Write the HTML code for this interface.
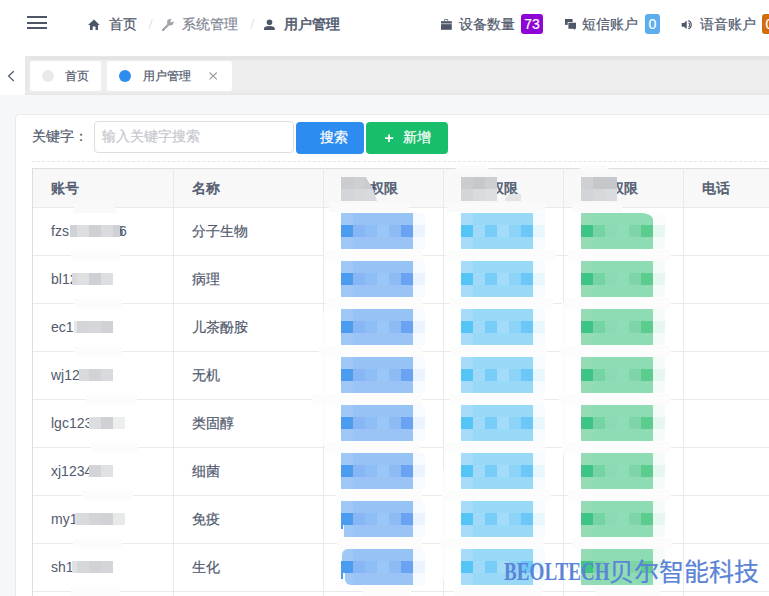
<!DOCTYPE html>
<html><head><meta charset="utf-8">
<style>
*{box-sizing:border-box;margin:0;padding:0}
html,body{-webkit-text-stroke-width:0.2px;width:769px;height:596px;overflow:hidden;background:#f5f7f9;font-family:"Liberation Sans",sans-serif;color:#515a6e;font-size:14px;position:relative}
div,span,svg{position:absolute}
.ham{left:27px;width:20px;height:2px;background:#4e5668}
.t{height:20px;line-height:20px;font-size:14px;white-space:nowrap}
.badge{top:14px;height:20px;border-radius:3px;color:#fff;font-size:14px;line-height:21px;text-align:center}
.tab{top:61px;height:30px;background:#fff;border-radius:3px;font-size:12px;line-height:30px}
.dot{width:12px;height:12px;border-radius:6px;top:9px}
.btn{top:122px;height:32px;border-radius:4px;color:#fff;font-size:14px;line-height:32px;white-space:nowrap}
.hl{height:1px;background:#e8eaec}
.vl{width:1px;background:#e8eaec}
.cell{height:20px;line-height:20px;font-size:14px;white-space:nowrap;color:#515a6e}
.th{font-weight:normal;-webkit-text-stroke-width:0.55px}
.m{width:12px;height:12px}
</style></head><body>
<!-- header -->
<div style="left:0;top:0;width:769px;height:56px;background:#fff"></div>
<div class="ham" style="top:16px"></div>
<div class="ham" style="top:22px"></div>
<div class="ham" style="top:27px"></div>
<svg style="left:84px;top:12px" width="24" height="24" viewBox="84 12 24 24"><path d="M88 25 L94 19.5 L99.7 25 L98 25 L98 30 L95.5 30 L95.5 26.5 L92.7 26.5 L92.7 30 L90 30 L90 25 Z" fill="#4e5668"/></svg>
<div class="t" style="left:109px;top:14px;color:#515a6e">首页</div>
<svg style="left:140px;top:12px" width="24" height="24" viewBox="140 12 24 24"><path d="M152.3 19 L149.2 28.6" stroke="#dcdee2" stroke-width="1"/></svg>
<svg style="left:158px;top:15px" width="20" height="20" viewBox="158 15 20 20"><path d="M163 30 L169 24" stroke="#a0a4ab" stroke-width="2.4" stroke-linecap="round"/><circle cx="170.3" cy="22.3" r="3.2" fill="#a0a4ab"/><path d="M170.9 21.7 L174.5 18.1" stroke="#fff" stroke-width="2.3" stroke-linecap="butt"/></svg>
<div class="t" style="left:182px;top:14px;color:#808695">系统管理</div>
<svg style="left:244px;top:12px" width="24" height="24" viewBox="244 12 24 24"><path d="M254 19.2 L250.9 28.5" stroke="#dcdee2" stroke-width="1"/></svg>
<svg style="left:260px;top:15px" width="20" height="20" viewBox="260 15 20 20"><circle cx="269.5" cy="22.3" r="2.8" fill="#4e5668"/><path d="M264 30 L264 28.5 Q264 26 269.4 26 Q274.8 26 274.8 28.5 L274.8 30 Z" fill="#4e5668"/></svg>
<div class="t" style="left:284px;top:14px;color:#515a6e;-webkit-text-stroke-width:0.55px">用户管理</div>

<svg style="left:436px;top:14px" width="20" height="20" viewBox="436 14 20 20"><path d="M444.6 21.2 L444.6 19.5 L447.7 19.5 L447.7 21.2" stroke="#6a7182" stroke-width="0.9" fill="none"/><rect x="441" y="21.2" width="10.8" height="8.6" fill="#4e5668"/><rect x="441" y="23.3" width="10.8" height="0.9" fill="#c9ccd2"/></svg>
<div class="t" style="left:459px;top:14px">设备数量</div>
<div class="badge" style="left:521px;width:22px;background:#8e06d6">73</div>
<svg style="left:560px;top:14px" width="20" height="20" viewBox="560 14 20 20"><rect x="565" y="19" width="7.6" height="5.9" fill="#4e5668"/><rect x="567.7" y="22" width="9" height="7.5" fill="#fff"/><rect x="568.4" y="22.7" width="7.6" height="6.1" fill="#4e5668"/><path d="M573.5 28.5 L575 30.3 L575 28.5 Z" fill="#4e5668"/></svg>
<div class="t" style="left:582px;top:14px">短信账户</div>
<div class="badge" style="left:645px;width:15px;background:#5cadee">0</div>
<svg style="left:676px;top:14px" width="20" height="20" viewBox="676 14 20 20"><path d="M681.7 22.9 L684 22.9 L686.7 20.4 L686.7 28.9 L684 26.8 L681.7 26.8 Z" fill="#4e5668"/><path d="M688.5 22.6 A2.6 2.6 0 0 1 688.5 27" stroke="#4e5668" stroke-width="1.1" fill="none"/><path d="M688.3 20.5 A4.6 4.6 0 0 1 688.3 29.1" stroke="#4e5668" stroke-width="1.1" fill="none"/></svg>
<div class="t" style="left:700px;top:14px">语音账户</div>
<div class="badge" style="left:762px;width:15px;background:#d16b0d">0</div>

<!-- tabs -->
<div style="left:0;top:56px;width:769px;height:39px;background:#eeeeee"></div>
<div style="left:0;top:56px;width:769px;height:5px;background:linear-gradient(#e8e8e8 0,#e2e2e2 45%,#e8e8e8 75%,#eeeeee 100%)"></div>
<div style="left:25px;top:56px;width:5px;height:39px;background:linear-gradient(90deg,#e6e6e6,#eaeaea)"></div><div style="left:0;top:91px;width:769px;height:4px;background:linear-gradient(#eeeeee,#e6e6e6)"></div><div style="left:0;top:56px;width:25px;height:39px;background:#fff"></div>
<svg style="left:0;top:60px" width="25" height="35" viewBox="0 60 25 35"><path d="M13.8 71.2 L8.6 76.1 L13.8 81" stroke="#515a6e" stroke-width="1.3" fill="none"/></svg>
<div class="tab" style="left:30px;width:71px"><span class="dot" style="left:12px;top:9px;background:#e8eaec"></span><span style="left:35px;top:0">首页</span></div>
<div class="tab" style="left:107px;width:125px"><span class="dot" style="left:12px;top:9px;background:#2d8cf0"></span><span style="left:36px;top:0">用户管理</span><svg style="left:102px;top:11px" width="10" height="9" viewBox="209 72.5 10 9"><path d="M209.5 73 L216.8 79.8 M216.8 73 L209.5 79.8" stroke="#9a9a9a" stroke-width="1.1"/></svg></div>

<!-- card -->
<div style="left:15px;top:114px;width:780px;height:520px;background:#fff;border:1px solid #e8eaec;border-radius:4px"></div>
<div class="t" style="left:32px;top:126px">关键字：</div>
<div style="left:94px;top:121px;width:200px;height:32px;border:1px solid #dcdee2;border-radius:4px;background:#fff"></div>
<div class="t" style="left:102px;top:126px;color:#c5c8ce">输入关键字搜索</div>
<div class="btn" style="left:296px;width:68px;background:#2d8cf0"><span style="left:24px;top:-1px">搜索</span></div>
<div class="btn" style="left:366px;width:82px;background:#19be6b"><svg style="left:17px;top:11px" width="12" height="12" viewBox="383 133 12 12"><path d="M389 134.5 L389 141.9 M385 138.2 L393.2 138.2" stroke="#fff" stroke-width="1.8"/></svg><span style="left:37px;top:-1px">新增</span></div>
<div style="left:32px;top:161px;width:740px;height:0;border-top:1px dashed #e3e5e8"></div>

<!-- table -->
<div style="left:32px;top:168px;width:740px;height:40px;background:#f8f8f9"></div>
<div class="hl" style="left:32px;top:168px;width:740px;background:#dcdee2"></div>
<div class="hl" style="left:32px;top:207px;width:740px"></div>
<div class="hl" style="left:32px;top:255px;width:740px"></div>
<div class="hl" style="left:32px;top:303px;width:740px"></div>
<div class="hl" style="left:32px;top:351px;width:740px"></div>
<div class="hl" style="left:32px;top:399px;width:740px"></div>
<div class="hl" style="left:32px;top:447px;width:740px"></div>
<div class="hl" style="left:32px;top:495px;width:740px"></div>
<div class="hl" style="left:32px;top:543px;width:740px"></div>
<div class="hl" style="left:32px;top:591px;width:740px"></div>
<div class="vl" style="left:32px;top:168px;height:430px;background:#dcdee2"></div>
<div class="vl" style="left:173px;top:168px;height:430px"></div>
<div class="vl" style="left:323px;top:168px;height:430px"></div>
<div class="vl" style="left:443px;top:168px;height:430px"></div>
<div class="vl" style="left:563px;top:168px;height:430px"></div>
<div class="vl" style="left:683px;top:168px;height:430px"></div>

<div class="cell th" style="left:51px;top:178px">账号</div>
<div class="cell th" style="left:192px;top:178px">名称</div>
<div class="cell th" style="left:342px;top:178px">用户权限</div>
<div class="cell th" style="left:462px;top:178px">用户权限</div>
<div class="cell th" style="left:582px;top:178px">用户权限</div>
<div class="cell th" style="left:702px;top:178px">电话</div>

<div class="cell" style="-webkit-text-stroke-width:0;left:51px;top:221px">fzs1234566</div><div class="cell" style="-webkit-text-stroke-width:0;left:119px;top:221px;width:10px">6</div><div class="cell" style="left:192px;top:221px">分子生物</div>
<div class="cell" style="-webkit-text-stroke-width:0;left:51px;top:269px">bl12345</div><div class="cell" style="left:192px;top:269px">病理</div>
<div class="cell" style="-webkit-text-stroke-width:0;left:51px;top:317px">ec12345</div><div class="cell" style="left:192px;top:317px">儿茶酚胺</div>
<div class="cell" style="-webkit-text-stroke-width:0;left:51px;top:365px">wj12345</div><div class="cell" style="left:192px;top:365px">无机</div>
<div class="cell" style="-webkit-text-stroke-width:0;left:51px;top:413px">lgc123456</div><div class="cell" style="left:192px;top:413px">类固醇</div>
<div class="cell" style="-webkit-text-stroke-width:0;left:51px;top:461px">xj12345</div><div class="cell" style="left:192px;top:461px">细菌</div>
<div class="cell" style="-webkit-text-stroke-width:0;left:51px;top:509px">my123456</div><div class="cell" style="left:192px;top:509px">免疫</div>
<div class="cell" style="-webkit-text-stroke-width:0;left:51px;top:557px">sh12345</div><div class="cell" style="left:192px;top:557px">生化</div>

<div style="left:322px;top:313px;width:3px;height:132px;background:#fcfcfc"></div>
<div style="left:442px;top:470px;width:3px;height:110px;background:#fcfcfc"></div>
<div style="left:562px;top:303px;width:3px;height:152px;background:#fcfcfc"></div>
<div style="left:324px;top:250px;width:99px;height:11px;background:#fcfcfc"></div>
<div style="left:326px;top:298px;width:97px;height:11px;background:#fcfcfc"></div>
<div style="left:319px;top:346px;width:104px;height:11px;background:#fcfcfc"></div>
<div style="left:312px;top:394px;width:110px;height:11px;background:#fcfcfc"></div>
<div style="left:325px;top:442px;width:95px;height:11px;background:#fcfcfc"></div>
<div style="left:336px;top:490px;width:86px;height:11px;background:#fcfcfc"></div>
<div style="left:337px;top:538px;width:85px;height:11px;background:#fcfcfc"></div>
<div style="left:363px;top:586px;width:48px;height:11px;background:#fcfcfc"></div>
<div style="left:446px;top:250px;width:110px;height:11px;background:#fcfcfc"></div>
<div style="left:450px;top:298px;width:103px;height:11px;background:#fcfcfc"></div>
<div style="left:451px;top:346px;width:96px;height:11px;background:#fcfcfc"></div>
<div style="left:450px;top:394px;width:94px;height:11px;background:#fcfcfc"></div>
<div style="left:444px;top:442px;width:101px;height:11px;background:#fcfcfc"></div>
<div style="left:442px;top:490px;width:109px;height:11px;background:#fcfcfc"></div>
<div style="left:440px;top:538px;width:104px;height:11px;background:#fcfcfc"></div>
<div style="left:454px;top:586px;width:89px;height:11px;background:#fcfcfc"></div>
<div style="left:568px;top:250px;width:103px;height:11px;background:#fcfcfc"></div>
<div style="left:564px;top:298px;width:107px;height:11px;background:#fcfcfc"></div>
<div style="left:560px;top:346px;width:111px;height:11px;background:#fcfcfc"></div>
<div style="left:559px;top:394px;width:112px;height:11px;background:#fcfcfc"></div>
<div style="left:563px;top:442px;width:108px;height:11px;background:#fcfcfc"></div>
<div style="left:568px;top:490px;width:103px;height:11px;background:#fcfcfc"></div>
<div style="left:572px;top:538px;width:100px;height:11px;background:#fcfcfc"></div>
<div style="left:596px;top:586px;width:64px;height:11px;background:#fcfcfc"></div>
<div style="left:341px;top:213px;width:12px;height:12px;background:#a0c8f6"></div>
<div style="left:353px;top:213px;width:60px;height:12px;background:#97c2f5"></div>
<div style="left:341px;top:225px;width:12px;height:12px;background:#4b9bf1"></div>
<div style="left:353px;top:225px;width:12px;height:12px;background:#86b6f3"></div>
<div style="left:365px;top:225px;width:12px;height:12px;background:#8fbdf5"></div>
<div style="left:377px;top:225px;width:12px;height:12px;background:#9ac7f7"></div>
<div style="left:389px;top:225px;width:12px;height:12px;background:#8dbcf5"></div>
<div style="left:401px;top:225px;width:12px;height:12px;background:#69a3f1"></div>
<div style="left:341px;top:237px;width:12px;height:12px;background:#a0c8f6"></div>
<div style="left:353px;top:237px;width:60px;height:12px;background:#9ac4f6"></div>
<div style="left:413px;top:213px;width:12px;height:12px;background:#f7faff"></div>
<div style="left:413px;top:225px;width:12px;height:12px;background:#eaf3fe"></div>
<div style="left:413px;top:237px;width:12px;height:12px;background:#f7faff"></div>
<div style="left:341px;top:261px;width:12px;height:12px;background:#a0c8f6"></div>
<div style="left:353px;top:261px;width:60px;height:12px;background:#97c2f5"></div>
<div style="left:341px;top:273px;width:12px;height:12px;background:#4b9bf1"></div>
<div style="left:353px;top:273px;width:12px;height:12px;background:#86b6f3"></div>
<div style="left:365px;top:273px;width:12px;height:12px;background:#8fbdf5"></div>
<div style="left:377px;top:273px;width:12px;height:12px;background:#9ac7f7"></div>
<div style="left:389px;top:273px;width:12px;height:12px;background:#8dbcf5"></div>
<div style="left:401px;top:273px;width:12px;height:12px;background:#69a3f1"></div>
<div style="left:341px;top:285px;width:12px;height:12px;background:#a0c8f6"></div>
<div style="left:353px;top:285px;width:60px;height:12px;background:#9ac4f6"></div>
<div style="left:413px;top:261px;width:12px;height:12px;background:#f7faff"></div>
<div style="left:413px;top:273px;width:12px;height:12px;background:#eaf3fe"></div>
<div style="left:413px;top:285px;width:12px;height:12px;background:#f7faff"></div>
<div style="left:341px;top:309px;width:12px;height:12px;background:#a0c8f6"></div>
<div style="left:353px;top:309px;width:60px;height:12px;background:#97c2f5"></div>
<div style="left:341px;top:321px;width:12px;height:12px;background:#4b9bf1"></div>
<div style="left:353px;top:321px;width:12px;height:12px;background:#86b6f3"></div>
<div style="left:365px;top:321px;width:12px;height:12px;background:#8fbdf5"></div>
<div style="left:377px;top:321px;width:12px;height:12px;background:#9ac7f7"></div>
<div style="left:389px;top:321px;width:12px;height:12px;background:#8dbcf5"></div>
<div style="left:401px;top:321px;width:12px;height:12px;background:#69a3f1"></div>
<div style="left:341px;top:333px;width:12px;height:12px;background:#a0c8f6"></div>
<div style="left:353px;top:333px;width:60px;height:12px;background:#9ac4f6"></div>
<div style="left:413px;top:309px;width:12px;height:12px;background:#f7faff"></div>
<div style="left:413px;top:321px;width:12px;height:12px;background:#eaf3fe"></div>
<div style="left:413px;top:333px;width:12px;height:12px;background:#f7faff"></div>
<div style="left:341px;top:357px;width:12px;height:12px;background:#a0c8f6"></div>
<div style="left:353px;top:357px;width:60px;height:12px;background:#97c2f5"></div>
<div style="left:341px;top:369px;width:12px;height:12px;background:#4b9bf1"></div>
<div style="left:353px;top:369px;width:12px;height:12px;background:#86b6f3"></div>
<div style="left:365px;top:369px;width:12px;height:12px;background:#8fbdf5"></div>
<div style="left:377px;top:369px;width:12px;height:12px;background:#9ac7f7"></div>
<div style="left:389px;top:369px;width:12px;height:12px;background:#8dbcf5"></div>
<div style="left:401px;top:369px;width:12px;height:12px;background:#69a3f1"></div>
<div style="left:341px;top:381px;width:12px;height:12px;background:#a0c8f6"></div>
<div style="left:353px;top:381px;width:60px;height:12px;background:#9ac4f6"></div>
<div style="left:413px;top:357px;width:12px;height:12px;background:#f7faff"></div>
<div style="left:413px;top:369px;width:12px;height:12px;background:#eaf3fe"></div>
<div style="left:413px;top:381px;width:12px;height:12px;background:#f7faff"></div>
<div style="left:341px;top:405px;width:12px;height:12px;background:#a0c8f6"></div>
<div style="left:353px;top:405px;width:60px;height:12px;background:#97c2f5"></div>
<div style="left:341px;top:417px;width:12px;height:12px;background:#4b9bf1"></div>
<div style="left:353px;top:417px;width:12px;height:12px;background:#86b6f3"></div>
<div style="left:365px;top:417px;width:12px;height:12px;background:#8fbdf5"></div>
<div style="left:377px;top:417px;width:12px;height:12px;background:#9ac7f7"></div>
<div style="left:389px;top:417px;width:12px;height:12px;background:#8dbcf5"></div>
<div style="left:401px;top:417px;width:12px;height:12px;background:#69a3f1"></div>
<div style="left:341px;top:429px;width:12px;height:12px;background:#a0c8f6"></div>
<div style="left:353px;top:429px;width:60px;height:12px;background:#9ac4f6"></div>
<div style="left:413px;top:405px;width:12px;height:12px;background:#f7faff"></div>
<div style="left:413px;top:417px;width:12px;height:12px;background:#eaf3fe"></div>
<div style="left:413px;top:429px;width:12px;height:12px;background:#f7faff"></div>
<div style="left:341px;top:453px;width:12px;height:12px;background:#a0c8f6"></div>
<div style="left:353px;top:453px;width:60px;height:12px;background:#97c2f5"></div>
<div style="left:341px;top:465px;width:12px;height:12px;background:#4b9bf1"></div>
<div style="left:353px;top:465px;width:12px;height:12px;background:#86b6f3"></div>
<div style="left:365px;top:465px;width:12px;height:12px;background:#8fbdf5"></div>
<div style="left:377px;top:465px;width:12px;height:12px;background:#9ac7f7"></div>
<div style="left:389px;top:465px;width:12px;height:12px;background:#8dbcf5"></div>
<div style="left:401px;top:465px;width:12px;height:12px;background:#69a3f1"></div>
<div style="left:341px;top:477px;width:12px;height:12px;background:#a0c8f6"></div>
<div style="left:353px;top:477px;width:60px;height:12px;background:#9ac4f6"></div>
<div style="left:413px;top:453px;width:12px;height:12px;background:#f7faff"></div>
<div style="left:413px;top:465px;width:12px;height:12px;background:#eaf3fe"></div>
<div style="left:413px;top:477px;width:12px;height:12px;background:#f7faff"></div>
<div style="left:341px;top:501px;width:12px;height:12px;background:#a0c8f6"></div>
<div style="left:353px;top:501px;width:60px;height:12px;background:#97c2f5"></div>
<div style="left:341px;top:513px;width:12px;height:12px;background:#4b9bf1"></div>
<div style="left:353px;top:513px;width:12px;height:12px;background:#86b6f3"></div>
<div style="left:365px;top:513px;width:12px;height:12px;background:#8fbdf5"></div>
<div style="left:377px;top:513px;width:12px;height:12px;background:#9ac7f7"></div>
<div style="left:389px;top:513px;width:12px;height:12px;background:#8dbcf5"></div>
<div style="left:401px;top:513px;width:12px;height:12px;background:#69a3f1"></div>
<div style="left:341px;top:525px;width:12px;height:12px;background:#a0c8f6"></div>
<div style="left:353px;top:525px;width:60px;height:12px;background:#9ac4f6"></div>
<div style="left:341px;top:525px;width:3px;height:12px;background:#fcfcfc"></div>
<div style="left:341px;top:525px;width:2px;height:4px;background:#4b9bf1"></div>
<div style="left:344px;top:525px;width:9px;height:12px;background:#a0c8f6;border-bottom-left-radius:5px"></div>
<div style="left:413px;top:501px;width:12px;height:12px;background:#f7faff"></div>
<div style="left:413px;top:513px;width:12px;height:12px;background:#eaf3fe"></div>
<div style="left:413px;top:525px;width:12px;height:12px;background:#f7faff"></div>
<div style="left:341px;top:549px;width:12px;height:12px;background:#a0c8f6"></div>
<div style="left:353px;top:549px;width:60px;height:12px;background:#97c2f5"></div>
<div style="left:341px;top:561px;width:12px;height:12px;background:#4b9bf1"></div>
<div style="left:353px;top:561px;width:12px;height:12px;background:#86b6f3"></div>
<div style="left:365px;top:561px;width:12px;height:12px;background:#8fbdf5"></div>
<div style="left:377px;top:561px;width:12px;height:12px;background:#9ac7f7"></div>
<div style="left:389px;top:561px;width:12px;height:12px;background:#8dbcf5"></div>
<div style="left:401px;top:561px;width:12px;height:12px;background:#69a3f1"></div>
<div style="left:341px;top:573px;width:12px;height:12px;background:#a0c8f6"></div>
<div style="left:353px;top:573px;width:60px;height:12px;background:#9ac4f6"></div>
<div style="left:341px;top:549px;width:12px;height:12px;background:#fcfcfc"></div>
<div style="left:342px;top:549px;width:11px;height:12px;background:#a0c8f6;border-top-left-radius:6px"></div>
<div style="left:341px;top:573px;width:12px;height:12px;background:#fcfcfc"></div>
<div style="left:341px;top:573px;width:2px;height:6px;background:#4b9bf1"></div>
<div style="left:345px;top:573px;width:8px;height:12px;background:#a0c8f6;border-bottom-left-radius:6px"></div>
<div style="left:413px;top:549px;width:12px;height:12px;background:#f7faff"></div>
<div style="left:413px;top:561px;width:12px;height:12px;background:#eaf3fe"></div>
<div style="left:413px;top:573px;width:12px;height:12px;background:#f7faff"></div>
<div style="left:461px;top:213px;width:12px;height:12px;background:#a6dcf9"></div>
<div style="left:473px;top:213px;width:60px;height:12px;background:#98d9f8"></div>
<div style="left:461px;top:225px;width:12px;height:12px;background:#55c4f6"></div>
<div style="left:473px;top:225px;width:12px;height:12px;background:#9fd9f8"></div>
<div style="left:485px;top:225px;width:12px;height:12px;background:#78cdf7"></div>
<div style="left:497px;top:225px;width:12px;height:12px;background:#a2dcf9"></div>
<div style="left:509px;top:225px;width:12px;height:12px;background:#8dd3f7"></div>
<div style="left:521px;top:225px;width:12px;height:12px;background:#6bc7f7"></div>
<div style="left:461px;top:237px;width:12px;height:12px;background:#a6dcf9"></div>
<div style="left:473px;top:237px;width:60px;height:12px;background:#98d9f8"></div>
<div style="left:533px;top:213px;width:12px;height:12px;background:#f6fbff"></div>
<div style="left:533px;top:225px;width:12px;height:12px;background:#e8f6fe"></div>
<div style="left:533px;top:237px;width:12px;height:12px;background:#f6fbff"></div>
<div style="left:461px;top:261px;width:12px;height:12px;background:#a6dcf9"></div>
<div style="left:473px;top:261px;width:60px;height:12px;background:#98d9f8"></div>
<div style="left:461px;top:273px;width:12px;height:12px;background:#55c4f6"></div>
<div style="left:473px;top:273px;width:12px;height:12px;background:#9fd9f8"></div>
<div style="left:485px;top:273px;width:12px;height:12px;background:#78cdf7"></div>
<div style="left:497px;top:273px;width:12px;height:12px;background:#a2dcf9"></div>
<div style="left:509px;top:273px;width:12px;height:12px;background:#8dd3f7"></div>
<div style="left:521px;top:273px;width:12px;height:12px;background:#6bc7f7"></div>
<div style="left:461px;top:285px;width:12px;height:12px;background:#a6dcf9"></div>
<div style="left:473px;top:285px;width:60px;height:12px;background:#98d9f8"></div>
<div style="left:533px;top:261px;width:12px;height:12px;background:#f6fbff"></div>
<div style="left:533px;top:273px;width:12px;height:12px;background:#e8f6fe"></div>
<div style="left:533px;top:285px;width:12px;height:12px;background:#f6fbff"></div>
<div style="left:461px;top:309px;width:12px;height:12px;background:#a6dcf9"></div>
<div style="left:473px;top:309px;width:60px;height:12px;background:#98d9f8"></div>
<div style="left:461px;top:321px;width:12px;height:12px;background:#55c4f6"></div>
<div style="left:473px;top:321px;width:12px;height:12px;background:#9fd9f8"></div>
<div style="left:485px;top:321px;width:12px;height:12px;background:#78cdf7"></div>
<div style="left:497px;top:321px;width:12px;height:12px;background:#a2dcf9"></div>
<div style="left:509px;top:321px;width:12px;height:12px;background:#8dd3f7"></div>
<div style="left:521px;top:321px;width:12px;height:12px;background:#6bc7f7"></div>
<div style="left:461px;top:333px;width:12px;height:12px;background:#a6dcf9"></div>
<div style="left:473px;top:333px;width:60px;height:12px;background:#98d9f8"></div>
<div style="left:533px;top:309px;width:12px;height:12px;background:#f6fbff"></div>
<div style="left:533px;top:321px;width:12px;height:12px;background:#e8f6fe"></div>
<div style="left:533px;top:333px;width:12px;height:12px;background:#f6fbff"></div>
<div style="left:461px;top:357px;width:12px;height:12px;background:#a6dcf9"></div>
<div style="left:473px;top:357px;width:60px;height:12px;background:#98d9f8"></div>
<div style="left:461px;top:369px;width:12px;height:12px;background:#55c4f6"></div>
<div style="left:473px;top:369px;width:12px;height:12px;background:#9fd9f8"></div>
<div style="left:485px;top:369px;width:12px;height:12px;background:#78cdf7"></div>
<div style="left:497px;top:369px;width:12px;height:12px;background:#a2dcf9"></div>
<div style="left:509px;top:369px;width:12px;height:12px;background:#8dd3f7"></div>
<div style="left:521px;top:369px;width:12px;height:12px;background:#6bc7f7"></div>
<div style="left:461px;top:381px;width:12px;height:12px;background:#a6dcf9"></div>
<div style="left:473px;top:381px;width:60px;height:12px;background:#98d9f8"></div>
<div style="left:533px;top:357px;width:12px;height:12px;background:#f6fbff"></div>
<div style="left:533px;top:369px;width:12px;height:12px;background:#e8f6fe"></div>
<div style="left:533px;top:381px;width:12px;height:12px;background:#f6fbff"></div>
<div style="left:461px;top:405px;width:12px;height:12px;background:#a6dcf9"></div>
<div style="left:473px;top:405px;width:60px;height:12px;background:#98d9f8"></div>
<div style="left:461px;top:417px;width:12px;height:12px;background:#55c4f6"></div>
<div style="left:473px;top:417px;width:12px;height:12px;background:#9fd9f8"></div>
<div style="left:485px;top:417px;width:12px;height:12px;background:#78cdf7"></div>
<div style="left:497px;top:417px;width:12px;height:12px;background:#a2dcf9"></div>
<div style="left:509px;top:417px;width:12px;height:12px;background:#8dd3f7"></div>
<div style="left:521px;top:417px;width:12px;height:12px;background:#6bc7f7"></div>
<div style="left:461px;top:429px;width:12px;height:12px;background:#a6dcf9"></div>
<div style="left:473px;top:429px;width:60px;height:12px;background:#98d9f8"></div>
<div style="left:533px;top:405px;width:12px;height:12px;background:#f6fbff"></div>
<div style="left:533px;top:417px;width:12px;height:12px;background:#e8f6fe"></div>
<div style="left:533px;top:429px;width:12px;height:12px;background:#f6fbff"></div>
<div style="left:461px;top:453px;width:12px;height:12px;background:#a6dcf9"></div>
<div style="left:473px;top:453px;width:60px;height:12px;background:#98d9f8"></div>
<div style="left:461px;top:465px;width:12px;height:12px;background:#55c4f6"></div>
<div style="left:473px;top:465px;width:12px;height:12px;background:#9fd9f8"></div>
<div style="left:485px;top:465px;width:12px;height:12px;background:#78cdf7"></div>
<div style="left:497px;top:465px;width:12px;height:12px;background:#a2dcf9"></div>
<div style="left:509px;top:465px;width:12px;height:12px;background:#8dd3f7"></div>
<div style="left:521px;top:465px;width:12px;height:12px;background:#6bc7f7"></div>
<div style="left:461px;top:477px;width:12px;height:12px;background:#a6dcf9"></div>
<div style="left:473px;top:477px;width:60px;height:12px;background:#98d9f8"></div>
<div style="left:533px;top:453px;width:12px;height:12px;background:#f6fbff"></div>
<div style="left:533px;top:465px;width:12px;height:12px;background:#e8f6fe"></div>
<div style="left:533px;top:477px;width:12px;height:12px;background:#f6fbff"></div>
<div style="left:461px;top:501px;width:12px;height:12px;background:#a6dcf9"></div>
<div style="left:473px;top:501px;width:60px;height:12px;background:#98d9f8"></div>
<div style="left:461px;top:513px;width:12px;height:12px;background:#55c4f6"></div>
<div style="left:473px;top:513px;width:12px;height:12px;background:#9fd9f8"></div>
<div style="left:485px;top:513px;width:12px;height:12px;background:#78cdf7"></div>
<div style="left:497px;top:513px;width:12px;height:12px;background:#a2dcf9"></div>
<div style="left:509px;top:513px;width:12px;height:12px;background:#8dd3f7"></div>
<div style="left:521px;top:513px;width:12px;height:12px;background:#6bc7f7"></div>
<div style="left:461px;top:525px;width:12px;height:12px;background:#a6dcf9"></div>
<div style="left:473px;top:525px;width:60px;height:12px;background:#98d9f8"></div>
<div style="left:533px;top:501px;width:12px;height:12px;background:#f6fbff"></div>
<div style="left:533px;top:513px;width:12px;height:12px;background:#e8f6fe"></div>
<div style="left:533px;top:525px;width:12px;height:12px;background:#f6fbff"></div>
<div style="left:461px;top:549px;width:12px;height:12px;background:#a6dcf9"></div>
<div style="left:473px;top:549px;width:60px;height:12px;background:#98d9f8"></div>
<div style="left:461px;top:561px;width:12px;height:12px;background:#55c4f6"></div>
<div style="left:473px;top:561px;width:12px;height:12px;background:#9fd9f8"></div>
<div style="left:485px;top:561px;width:12px;height:12px;background:#78cdf7"></div>
<div style="left:497px;top:561px;width:12px;height:12px;background:#a2dcf9"></div>
<div style="left:509px;top:561px;width:12px;height:12px;background:#8dd3f7"></div>
<div style="left:521px;top:561px;width:12px;height:12px;background:#6bc7f7"></div>
<div style="left:461px;top:573px;width:12px;height:12px;background:#a6dcf9"></div>
<div style="left:473px;top:573px;width:60px;height:12px;background:#98d9f8"></div>
<div style="left:533px;top:549px;width:12px;height:12px;background:#f6fbff"></div>
<div style="left:533px;top:561px;width:12px;height:12px;background:#e8f6fe"></div>
<div style="left:533px;top:573px;width:12px;height:12px;background:#f6fbff"></div>
<div style="left:581px;top:213px;width:12px;height:12px;background:#95dcb6"></div>
<div style="left:593px;top:213px;width:60px;height:12px;background:#8ddcb4"></div>
<div style="left:581px;top:225px;width:12px;height:12px;background:#3ec484"></div>
<div style="left:593px;top:225px;width:12px;height:12px;background:#76d3a3"></div>
<div style="left:605px;top:225px;width:12px;height:12px;background:#8cdab3"></div>
<div style="left:617px;top:225px;width:12px;height:12px;background:#8fdcb8"></div>
<div style="left:629px;top:225px;width:12px;height:12px;background:#7fd5a9"></div>
<div style="left:641px;top:225px;width:12px;height:12px;background:#5ccb8e"></div>
<div style="left:581px;top:237px;width:12px;height:12px;background:#95dcb6"></div>
<div style="left:593px;top:237px;width:60px;height:12px;background:#8ddcb4"></div>
<div style="left:641px;top:213px;width:12px;height:12px;background:#fcfcfc"></div>
<div style="left:641px;top:213px;width:12px;height:12px;background:#8ddcb4;border-top-right-radius:12px 7px"></div>
<div style="left:653px;top:213px;width:12px;height:12px;background:#fcfcfc"></div>
<div style="left:653px;top:225px;width:12px;height:12px;background:#e5f7ee"></div>
<div style="left:653px;top:237px;width:12px;height:12px;background:#f5fbf8"></div>
<div style="left:581px;top:261px;width:12px;height:12px;background:#95dcb6"></div>
<div style="left:593px;top:261px;width:60px;height:12px;background:#8ddcb4"></div>
<div style="left:581px;top:273px;width:12px;height:12px;background:#3ec484"></div>
<div style="left:593px;top:273px;width:12px;height:12px;background:#76d3a3"></div>
<div style="left:605px;top:273px;width:12px;height:12px;background:#8cdab3"></div>
<div style="left:617px;top:273px;width:12px;height:12px;background:#8fdcb8"></div>
<div style="left:629px;top:273px;width:12px;height:12px;background:#7fd5a9"></div>
<div style="left:641px;top:273px;width:12px;height:12px;background:#5ccb8e"></div>
<div style="left:581px;top:285px;width:12px;height:12px;background:#95dcb6"></div>
<div style="left:593px;top:285px;width:60px;height:12px;background:#8ddcb4"></div>
<div style="left:653px;top:261px;width:12px;height:12px;background:#f5fbf8"></div>
<div style="left:653px;top:273px;width:12px;height:12px;background:#e5f7ee"></div>
<div style="left:653px;top:285px;width:12px;height:12px;background:#f5fbf8"></div>
<div style="left:581px;top:309px;width:12px;height:12px;background:#95dcb6"></div>
<div style="left:593px;top:309px;width:60px;height:12px;background:#8ddcb4"></div>
<div style="left:581px;top:321px;width:12px;height:12px;background:#3ec484"></div>
<div style="left:593px;top:321px;width:12px;height:12px;background:#76d3a3"></div>
<div style="left:605px;top:321px;width:12px;height:12px;background:#8cdab3"></div>
<div style="left:617px;top:321px;width:12px;height:12px;background:#8fdcb8"></div>
<div style="left:629px;top:321px;width:12px;height:12px;background:#7fd5a9"></div>
<div style="left:641px;top:321px;width:12px;height:12px;background:#5ccb8e"></div>
<div style="left:581px;top:333px;width:12px;height:12px;background:#95dcb6"></div>
<div style="left:593px;top:333px;width:60px;height:12px;background:#8ddcb4"></div>
<div style="left:653px;top:309px;width:12px;height:12px;background:#f5fbf8"></div>
<div style="left:653px;top:321px;width:12px;height:12px;background:#e5f7ee"></div>
<div style="left:653px;top:333px;width:12px;height:12px;background:#f5fbf8"></div>
<div style="left:581px;top:357px;width:12px;height:12px;background:#95dcb6"></div>
<div style="left:593px;top:357px;width:60px;height:12px;background:#8ddcb4"></div>
<div style="left:581px;top:369px;width:12px;height:12px;background:#3ec484"></div>
<div style="left:593px;top:369px;width:12px;height:12px;background:#76d3a3"></div>
<div style="left:605px;top:369px;width:12px;height:12px;background:#8cdab3"></div>
<div style="left:617px;top:369px;width:12px;height:12px;background:#8fdcb8"></div>
<div style="left:629px;top:369px;width:12px;height:12px;background:#7fd5a9"></div>
<div style="left:641px;top:369px;width:12px;height:12px;background:#5ccb8e"></div>
<div style="left:581px;top:381px;width:12px;height:12px;background:#95dcb6"></div>
<div style="left:593px;top:381px;width:60px;height:12px;background:#8ddcb4"></div>
<div style="left:653px;top:357px;width:12px;height:12px;background:#f5fbf8"></div>
<div style="left:653px;top:369px;width:12px;height:12px;background:#e5f7ee"></div>
<div style="left:653px;top:381px;width:12px;height:12px;background:#f5fbf8"></div>
<div style="left:581px;top:405px;width:12px;height:12px;background:#95dcb6"></div>
<div style="left:593px;top:405px;width:60px;height:12px;background:#8ddcb4"></div>
<div style="left:581px;top:417px;width:12px;height:12px;background:#3ec484"></div>
<div style="left:593px;top:417px;width:12px;height:12px;background:#76d3a3"></div>
<div style="left:605px;top:417px;width:12px;height:12px;background:#8cdab3"></div>
<div style="left:617px;top:417px;width:12px;height:12px;background:#8fdcb8"></div>
<div style="left:629px;top:417px;width:12px;height:12px;background:#7fd5a9"></div>
<div style="left:641px;top:417px;width:12px;height:12px;background:#5ccb8e"></div>
<div style="left:581px;top:429px;width:12px;height:12px;background:#95dcb6"></div>
<div style="left:593px;top:429px;width:60px;height:12px;background:#8ddcb4"></div>
<div style="left:653px;top:405px;width:12px;height:12px;background:#f5fbf8"></div>
<div style="left:653px;top:417px;width:12px;height:12px;background:#e5f7ee"></div>
<div style="left:653px;top:429px;width:12px;height:12px;background:#f5fbf8"></div>
<div style="left:581px;top:453px;width:12px;height:12px;background:#95dcb6"></div>
<div style="left:593px;top:453px;width:60px;height:12px;background:#8ddcb4"></div>
<div style="left:581px;top:465px;width:12px;height:12px;background:#3ec484"></div>
<div style="left:593px;top:465px;width:12px;height:12px;background:#76d3a3"></div>
<div style="left:605px;top:465px;width:12px;height:12px;background:#8cdab3"></div>
<div style="left:617px;top:465px;width:12px;height:12px;background:#8fdcb8"></div>
<div style="left:629px;top:465px;width:12px;height:12px;background:#7fd5a9"></div>
<div style="left:641px;top:465px;width:12px;height:12px;background:#5ccb8e"></div>
<div style="left:581px;top:477px;width:12px;height:12px;background:#95dcb6"></div>
<div style="left:593px;top:477px;width:60px;height:12px;background:#8ddcb4"></div>
<div style="left:653px;top:453px;width:12px;height:12px;background:#f5fbf8"></div>
<div style="left:653px;top:465px;width:12px;height:12px;background:#e5f7ee"></div>
<div style="left:653px;top:477px;width:12px;height:12px;background:#f5fbf8"></div>
<div style="left:581px;top:501px;width:12px;height:12px;background:#95dcb6"></div>
<div style="left:593px;top:501px;width:60px;height:12px;background:#8ddcb4"></div>
<div style="left:581px;top:513px;width:12px;height:12px;background:#3ec484"></div>
<div style="left:593px;top:513px;width:12px;height:12px;background:#76d3a3"></div>
<div style="left:605px;top:513px;width:12px;height:12px;background:#8cdab3"></div>
<div style="left:617px;top:513px;width:12px;height:12px;background:#8fdcb8"></div>
<div style="left:629px;top:513px;width:12px;height:12px;background:#7fd5a9"></div>
<div style="left:641px;top:513px;width:12px;height:12px;background:#5ccb8e"></div>
<div style="left:581px;top:525px;width:12px;height:12px;background:#95dcb6"></div>
<div style="left:593px;top:525px;width:60px;height:12px;background:#8ddcb4"></div>
<div style="left:653px;top:501px;width:12px;height:12px;background:#f5fbf8"></div>
<div style="left:653px;top:513px;width:12px;height:12px;background:#e5f7ee"></div>
<div style="left:653px;top:525px;width:12px;height:12px;background:#f5fbf8"></div>
<div style="left:581px;top:549px;width:12px;height:12px;background:#95dcb6"></div>
<div style="left:593px;top:549px;width:60px;height:12px;background:#8ddcb4"></div>
<div style="left:581px;top:561px;width:12px;height:12px;background:#3ec484"></div>
<div style="left:593px;top:561px;width:12px;height:12px;background:#76d3a3"></div>
<div style="left:605px;top:561px;width:12px;height:12px;background:#8cdab3"></div>
<div style="left:617px;top:561px;width:12px;height:12px;background:#8fdcb8"></div>
<div style="left:629px;top:561px;width:12px;height:12px;background:#7fd5a9"></div>
<div style="left:641px;top:561px;width:12px;height:12px;background:#5ccb8e"></div>
<div style="left:581px;top:573px;width:12px;height:12px;background:#95dcb6"></div>
<div style="left:593px;top:573px;width:60px;height:12px;background:#8ddcb4"></div>
<div style="left:653px;top:549px;width:12px;height:12px;background:#f5fbf8"></div>
<div style="left:653px;top:561px;width:12px;height:12px;background:#e5f7ee"></div>
<div style="left:653px;top:573px;width:12px;height:12px;background:#f5fbf8"></div>
<div style="left:341px;top:177px;width:12px;height:12px;background:#cbcccf"></div>
<div style="left:341px;top:189px;width:12px;height:12px;background:#d4d5d8"></div>
<div style="left:353px;top:177px;width:12px;height:12px;background:#cdcfd2"></div>
<div style="left:353px;top:189px;width:12px;height:12px;background:#d7d8db"></div>
<div style="left:365px;top:177px;width:8px;height:12px;background:#c9cbcf;clip-path:polygon(0 0,8% 0,100% 100%,0 100%)"></div>
<div style="left:365px;top:189px;width:12px;height:12px;background:#d9dadd;clip-path:polygon(0 0,67% 0,100% 100%,0 100%)"></div>
<div style="left:461px;top:177px;width:12px;height:12px;background:#cbcccf"></div>
<div style="left:461px;top:189px;width:12px;height:12px;background:#d4d5d8"></div>
<div style="left:473px;top:177px;width:12px;height:12px;background:#c6c8cb"></div>
<div style="left:473px;top:189px;width:12px;height:12px;background:#dadbde"></div>
<div style="left:485px;top:177px;width:12px;height:12px;background:#cdcfd2"></div>
<div style="left:485px;top:189px;width:12px;height:12px;background:#dddee0"></div>
<div style="left:581px;top:177px;width:12px;height:12px;background:#cfd0d3"></div>
<div style="left:581px;top:189px;width:12px;height:12px;background:#d3d4d7"></div>
<div style="left:593px;top:177px;width:12px;height:12px;background:#c5c7cb"></div>
<div style="left:593px;top:189px;width:12px;height:12px;background:#d6d8db"></div>
<div style="left:605px;top:177px;width:12px;height:12px;background:#c5c7cb"></div>
<div style="left:605px;top:189px;width:12px;height:12px;background:#d9dbde"></div>
<div style="left:73px;top:201px;width:43px;height:12px;background:#f9f9fa;border-radius:12px 12px 0 0"></div>
<div style="left:66px;top:203px;width:0px;height:9px;background:#f8f8f9"></div>
<div style="left:71px;top:251px;width:49px;height:9px;background:#fcfcfc"></div>
<div style="left:74px;top:299px;width:48px;height:9px;background:#fcfcfc"></div>
<div style="left:74px;top:347px;width:48px;height:9px;background:#fcfcfc"></div>
<div style="left:86px;top:395px;width:51px;height:9px;background:#fcfcfc"></div>
<div style="left:91px;top:443px;width:47px;height:9px;background:#fcfcfc"></div>
<div style="left:82px;top:491px;width:51px;height:9px;background:#fcfcfc"></div>
<div style="left:73px;top:539px;width:49px;height:9px;background:#fcfcfc"></div>
<div style="left:71px;top:587px;width:49px;height:9px;background:#fcfcfc"></div>
<div style="left:70px;top:222px;width:50px;height:18px;background:#fff"></div>
<div style="left:70px;top:225px;width:7px;height:12px;background:#d0d2d5"></div>
<div style="left:77px;top:225px;width:12px;height:12px;background:#dcdee0"></div>
<div style="left:89px;top:225px;width:12px;height:12px;background:#cfd0d4"></div>
<div style="left:101px;top:225px;width:12px;height:12px;background:#d9dbde"></div>
<div style="left:113px;top:225px;width:7px;height:12px;background:#cfd1d5"></div>
<div style="left:72px;top:270px;width:41px;height:18px;background:#fff"></div>
<div style="left:72px;top:273px;width:5px;height:12px;background:#d8dadd"></div>
<div style="left:77px;top:273px;width:12px;height:12px;background:#dfe0e2"></div>
<div style="left:89px;top:273px;width:12px;height:12px;background:#cdd0d4"></div>
<div style="left:101px;top:273px;width:12px;height:12px;background:#dcdee0"></div>
<div style="left:74px;top:318px;width:39px;height:18px;background:#fff"></div>
<div style="left:74px;top:321px;width:3px;height:12px;background:#e6e7e9"></div>
<div style="left:77px;top:321px;width:12px;height:12px;background:#d3d5d8"></div>
<div style="left:89px;top:321px;width:12px;height:12px;background:#d5d7da"></div>
<div style="left:101px;top:321px;width:12px;height:12px;background:#d0d2d6"></div>
<div style="left:79px;top:366px;width:34px;height:18px;background:#fff"></div>
<div style="left:79px;top:369px;width:10px;height:12px;background:#d8dadc"></div>
<div style="left:89px;top:369px;width:12px;height:12px;background:#d1d3d6"></div>
<div style="left:101px;top:369px;width:12px;height:12px;background:#d8dadd"></div>
<div style="left:89px;top:414px;width:36px;height:18px;background:#fff"></div>
<div style="left:89px;top:417px;width:12px;height:12px;background:#dcdde0"></div>
<div style="left:101px;top:417px;width:12px;height:12px;background:#cfd1d4"></div>
<div style="left:113px;top:417px;width:12px;height:12px;background:#eceef0"></div>
<div style="left:89px;top:462px;width:24px;height:18px;background:#fff"></div>
<div style="left:89px;top:465px;width:12px;height:12px;background:#d2d4d7"></div>
<div style="left:101px;top:465px;width:12px;height:12px;background:#dfe1e3"></div>
<div style="left:75px;top:510px;width:50px;height:18px;background:#fff"></div>
<div style="left:75px;top:513px;width:2px;height:12px;background:#e0e1e3"></div>
<div style="left:77px;top:513px;width:12px;height:12px;background:#d8dadc"></div>
<div style="left:89px;top:513px;width:12px;height:12px;background:#d2d4d7"></div>
<div style="left:101px;top:513px;width:12px;height:12px;background:#d0d2d5"></div>
<div style="left:113px;top:513px;width:12px;height:12px;background:#e8e9eb"></div>
<div style="left:72px;top:558px;width:41px;height:18px;background:#fff"></div>
<div style="left:72px;top:561px;width:5px;height:12px;background:#e0e1e3"></div>
<div style="left:77px;top:561px;width:12px;height:12px;background:#d6d8da"></div>
<div style="left:89px;top:561px;width:12px;height:12px;background:#d0d2d5"></div>
<div style="left:101px;top:561px;width:12px;height:12px;background:#d3d5d8"></div>
<div style="left:329px;top:203px;width:80px;height:9px;background:#fafafa"></div>
<div style="left:447px;top:203px;width:98px;height:9px;background:#fafafa"></div>
<div style="left:572px;top:203px;width:50px;height:9px;background:#fafafa"></div>
<div style="left:455px;top:165px;width:34px;height:6px;background:#fbfbfb;border-radius:6px 6px 0 0"></div>
<div style="left:579px;top:165px;width:30px;height:6px;background:#fbfbfb;border-radius:6px 6px 0 0"></div>
<div style="left:505px;top:194px;width:16px;height:7px;background:#e3e4e6;border-radius:16px 0 0 0"></div>
<div lang="zh-CN" style="left:503px;top:557px;height:28px;line-height:28px;font-family:'Liberation Serif',serif;font-size:24px;color:#5b84d6;white-space:nowrap"><span id="wmL" style="left:1px;top:1px;transform-origin:0 0;transform:scaleX(0.765);font-size:25px;font-weight:bold;-webkit-text-stroke-width:0">BEOLTECH</span><span id="wmC" style="left:106px;top:2px;font-size:25px">贝尔智能科技</span></div>
</body></html>
